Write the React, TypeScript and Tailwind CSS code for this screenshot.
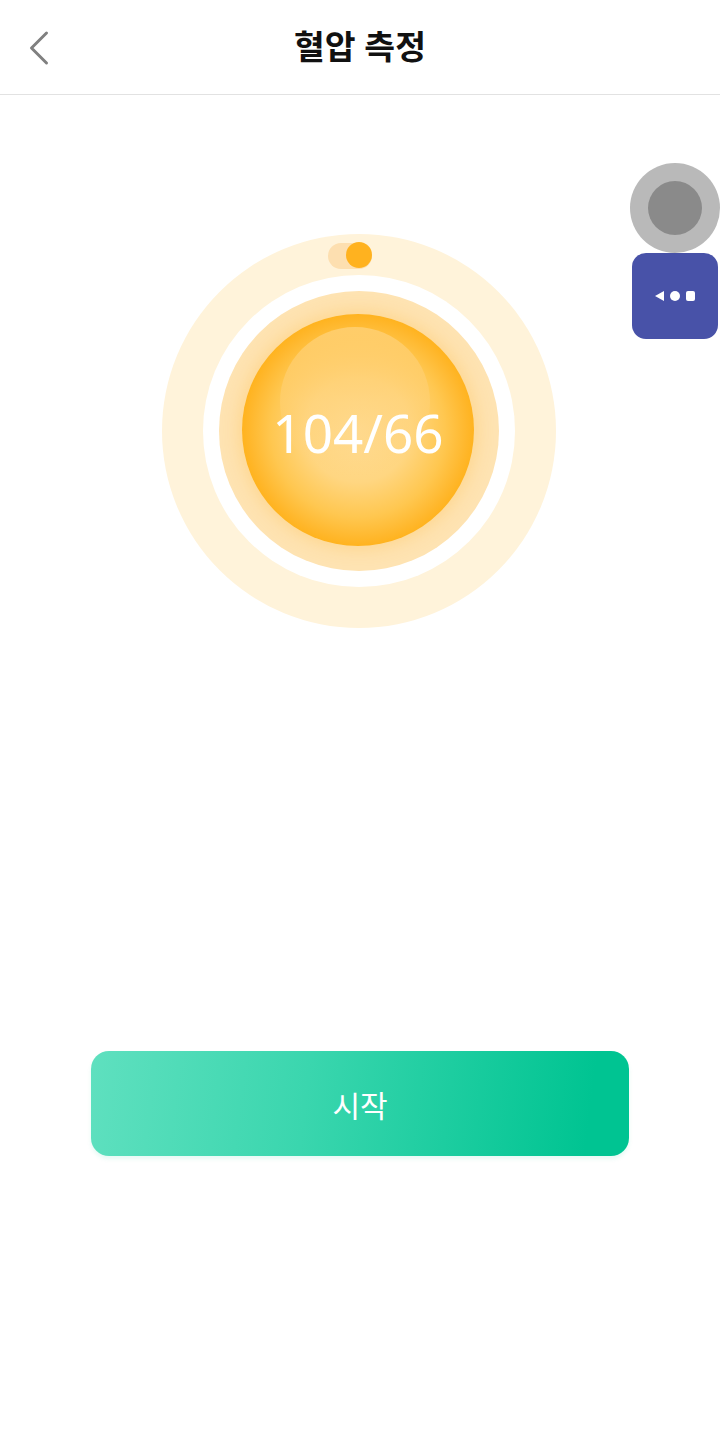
const font = 'font-["Noto_Sans","Noto_Sans_CJK_KR",sans-serif]';

const FloatingWidget = () => (
  <div className="absolute top-[163px] right-0 flex w-[90px] flex-col items-center">
    <div className="flex h-[90px] w-[90px] items-center justify-center rounded-full bg-[#b9b9b9]">
      <div className="h-[54px] w-[54px] rounded-full bg-[#8a8a8a]" />
    </div>
    <div className="flex h-[86px] w-[86px] items-center justify-center gap-[6px] rounded-[14px] bg-[#4852a8]">
      <svg width="9" height="10" viewBox="0 0 9 10" fill="white">
        <path d="M9 0V10L0 5Z" />
      </svg>
      <div className="h-[10px] w-[10px] rounded-full bg-white" />
      <div className="h-[10px] w-[9px] rounded-[2px] bg-white" />
    </div>
  </div>
);

const Gauge = () => (
  <div className="relative flex h-[394px] w-[394px] items-center justify-center rounded-full bg-[#fff3da]">
    <div className="absolute top-[9px] left-[166px] h-[26px] w-[44px] rounded-full bg-[#fddfb0]">
      <div className="absolute right-0 top-[-1px] h-[26px] w-[26px] rounded-full bg-[#ffb21f]" />
    </div>
    <div className="flex h-[312px] w-[312px] items-center justify-center rounded-full bg-white">
      <div className="flex h-[280px] w-[280px] items-center justify-center rounded-full bg-[#fee3b2]">
        <div className="relative mt-[-2px] ml-[-2px] flex h-[232px] w-[232px] items-center justify-center overflow-hidden rounded-full bg-[radial-gradient(closest-side,#ffdc95_0%,#ffd681_45%,#ffc750_75%,#ffb72b_94%,#ffb31f_100%)] shadow-[0_0_16px_4px_rgba(255,190,70,0.3)]">
          <div className="absolute top-[13px] left-[38px] h-[150px] w-[150px] rounded-full bg-gradient-to-b from-[#ffcd6a] via-[#ffd27a80] via-50% to-[#ffd57f00]" />
          <span className={`relative pt-[4px] text-[53px] leading-none font-normal text-white ${font}`}>104/66</span>
        </div>
      </div>
    </div>
  </div>
);

export default function App() {
  return (
    <div className={`relative min-h-[1442px] w-[720px] bg-white ${font}`}>
      <header className="relative flex h-[95px] items-center justify-center border-b border-[#e2e2e2]">
        <button className="absolute left-[28px] top-[30px]">
          <svg width="22" height="36" viewBox="0 0 22 36" fill="none" stroke="#808080" strokeWidth="3" strokeLinecap="round" strokeLinejoin="round">
            <path d="M18.5 3L3.5 18L18.5 33" />
          </svg>
        </button>
        <h1 className="text-[33.5px] leading-none font-bold text-[#111]">혈압 측정</h1>
      </header>

      <FloatingWidget />

      <main className="flex flex-col items-center">
        <div className="mt-[139px] ml-[-2px]">
          <Gauge />
        </div>
        <button className="mt-[423px] flex h-[105px] w-[538px] items-center justify-center rounded-[18px] bg-[linear-gradient(97deg,#5fe0bf_0%,#3ad6ae_40%,#00c492_92%)] pt-[4px] text-[30px] text-white shadow-[0_3px_4px_rgba(0,196,146,0.1)]">
          시작
        </button>
      </main>
    </div>
  );
}
